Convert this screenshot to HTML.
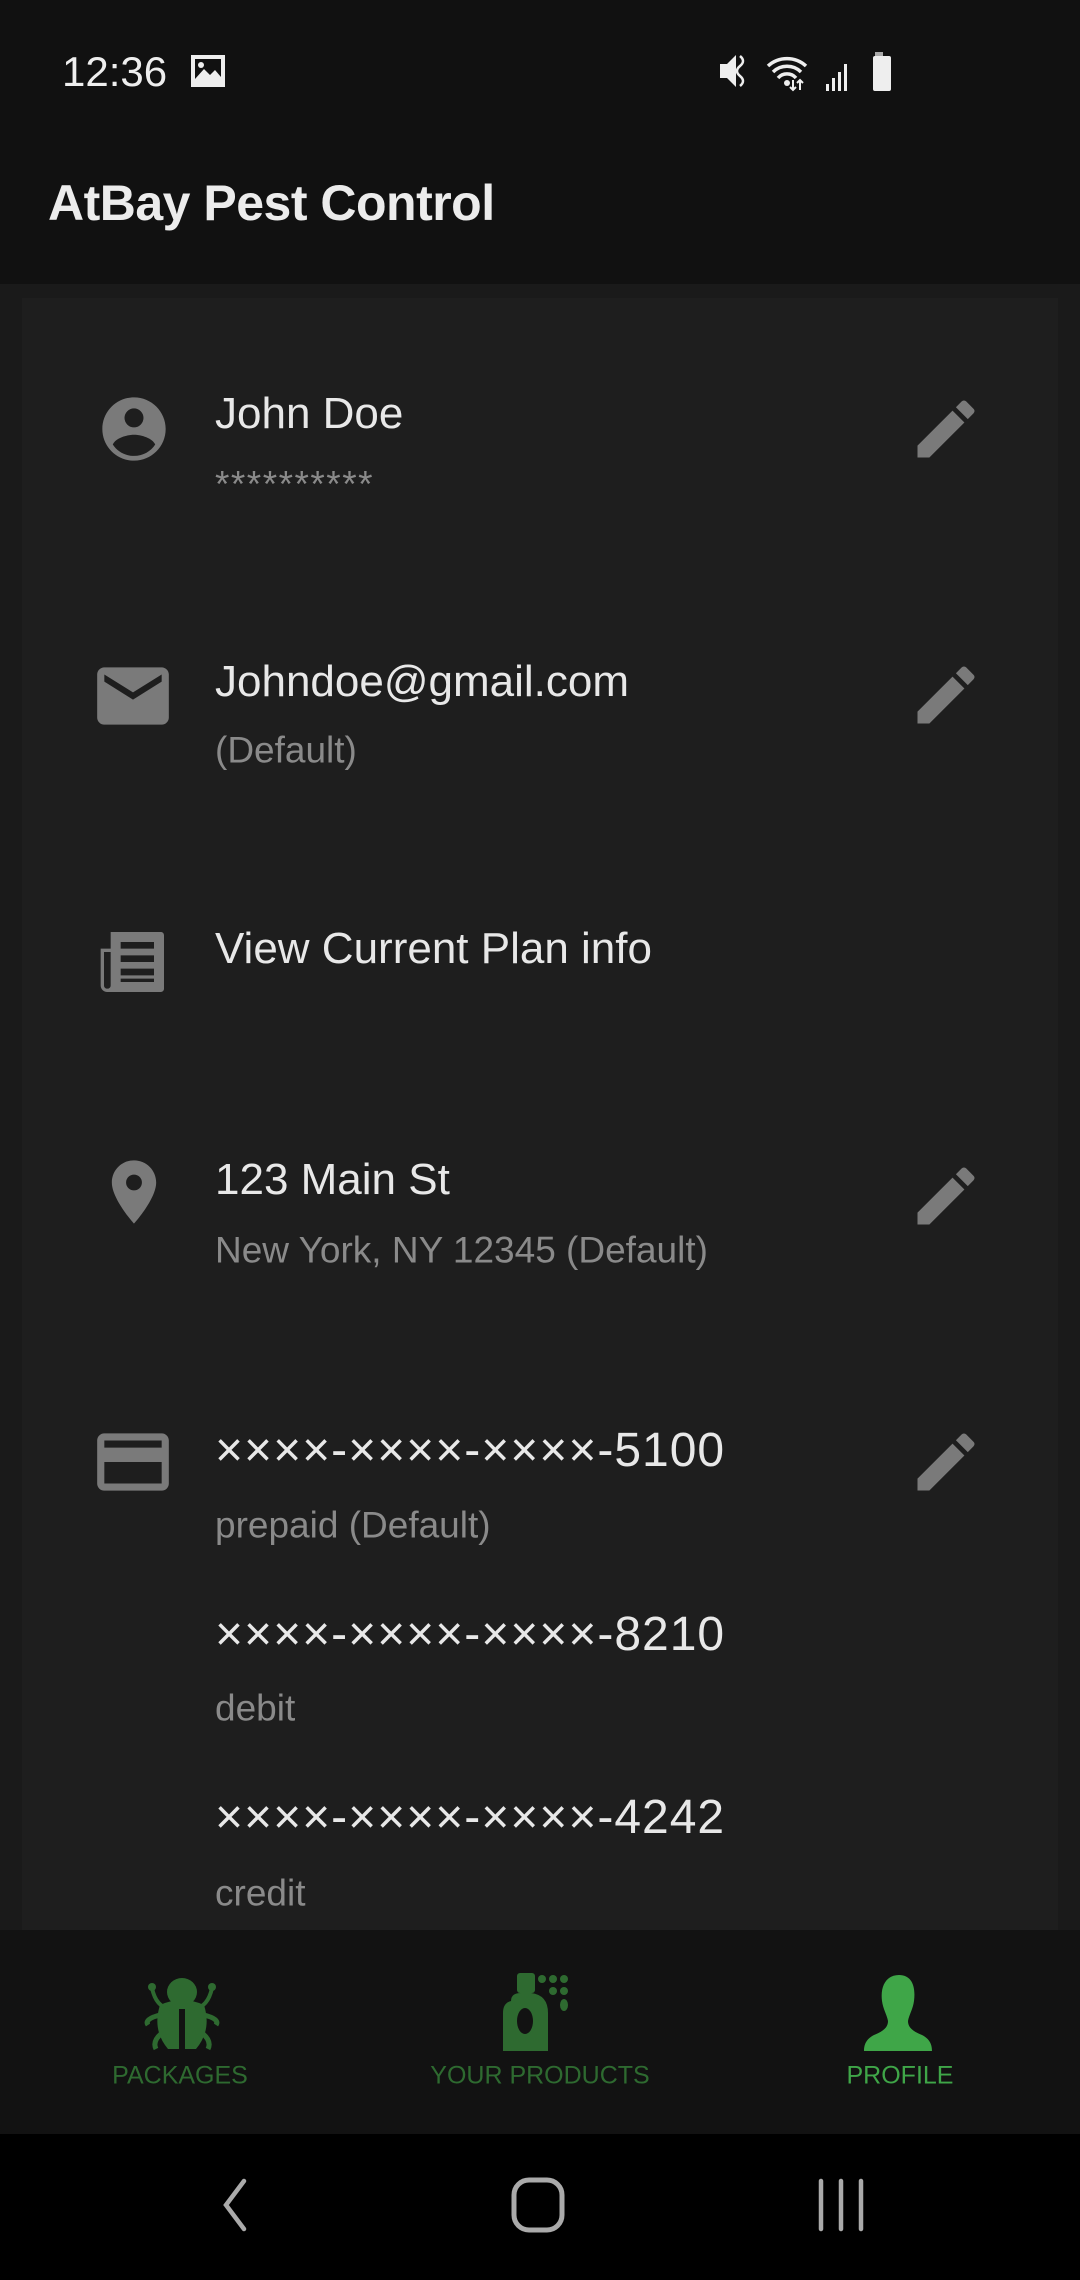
<!DOCTYPE html>
<html><head><meta charset="utf-8">
<style>
*{margin:0;padding:0;box-sizing:border-box}
body{width:1080px;height:2280px;background:#1a1a1a;font-family:"Liberation Sans",Roboto,sans-serif;position:relative;overflow:hidden;color:#e6e6e6}
.abs{position:absolute}
#top{left:0;top:0;width:1080px;height:284px;background:#111}
#card{left:22px;top:298px;width:1036px;height:1632px;background:#1e1e1e}
.t1{position:absolute;left:215px;font-size:44px;color:#e8e8e8;line-height:1;transform:translateY(-50%)}
.t2{position:absolute;left:215px;font-size:37px;color:#8a8a8a;line-height:1;transform:translateY(-50%)}
.cn{font-size:48px;letter-spacing:1px}
.ic{position:absolute}
#nav{left:0;top:1930px;width:1080px;height:204px;background:#121212}
#sys{left:0;top:2134px;width:1080px;height:146px;background:#000}
.lbl{position:absolute;top:2076px;font-size:25px;transform:translate(-50%,-50%);white-space:nowrap}
</style></head><body>
<div id="top" class="abs"></div>
<div class="abs" style="left:62px;top:48px;font-size:42px;color:#eee">12:36</div>
<svg class="abs" style="left:190px;top:54px" width="36" height="34" viewBox="0 0 36 34"><rect x="1" y="1" width="34" height="32" fill="#eee"/><rect x="5" y="5" width="26" height="20" fill="#111"/><circle cx="11" cy="11" r="3" fill="#eee"/><path d="M5 25 L14 15 L20 21 L25 16 L31 23 L31 25Z" fill="#eee"/></svg>
<svg class="abs" style="left:718px;top:50px" width="185" height="42" viewBox="0 0 185 42">
<path d="M2 14h7l9-9v32l-9-9H2z" fill="#eee"/><path d="M22 6 q6 5 0 10 q-6 5 0 10 q6 5 0 10" stroke="#eee" stroke-width="2.5" fill="none"/>
<path d="M50 16 a28 28 0 0 1 38 0 M55 22 a20 20 0 0 1 28 0 M60 28 a12 12 0 0 1 18 0" stroke="#eee" stroke-width="3.5" fill="none"/><circle cx="69" cy="33" r="3" fill="#eee"/><path d="M75 30v10 M72 37l3 3 3-3 M82 40v-10 M79 33l3-3 3 3" stroke="#eee" stroke-width="2" fill="none"/>
<rect x="108" y="34" width="3" height="7" fill="#eee"/><rect x="114" y="28" width="3" height="13" fill="#eee"/><rect x="120" y="22" width="3" height="19" fill="#eee"/><rect x="126" y="14" width="3" height="27" fill="#eee"/>
<rect x="157" y="2" width="8" height="5" fill="#aaa"/><rect x="155" y="6" width="18" height="35" rx="2" fill="#eee"/></svg>
<div class="abs" style="left:48px;top:174px;font-size:50px;font-weight:bold;color:#ececec;letter-spacing:-0.5px">AtBay Pest Control</div>

<div id="card" class="abs"></div>

<svg class="ic" style="left:96px;top:391px" width="76" height="76" viewBox="0 0 24 24"><path fill="#7a7a7a" d="M12 2C6.48 2 2 6.48 2 12s4.48 10 10 10 10-4.48 10-10S17.52 2 12 2zm0 3.5a3 3 0 1 1 0 6 3 3 0 0 1 0-6zm0 15c-2.8 0-5.3-1.4-6.7-3.6.8-2 4.4-3.1 6.7-3.1s5.9 1.1 6.7 3.1c-1.4 2.2-3.9 3.6-6.7 3.6z"/></svg>
<div class="t1" style="top:414px">John Doe</div>
<div class="t2" style="top:484px;letter-spacing:1.5px">**********</div>
<svg class="ic" style="left:908px;top:391px" width="76" height="76" viewBox="0 0 24 24"><path fill="#7a7a7a" d="M3 17.25V21h3.75L17.81 9.94l-3.75-3.75L3 17.25zM20.71 7.04a1 1 0 0 0 0-1.41l-2.34-2.34a1 1 0 0 0-1.41 0l-1.83 1.83 3.75 3.75 1.83-1.83z"/></svg>

<svg class="ic" style="left:90px;top:653px" width="86" height="86" viewBox="0 0 24 24"><path fill="#7a7a7a" d="M20 4H4c-1.1 0-2 .9-2 2v12c0 1.1.9 2 2 2h16c1.1 0 2-.9 2-2V6c0-1.1-.9-2-2-2zm0 4l-8 5-8-5V6l8 5 8-5v2z"/></svg>
<div class="t1" style="top:682px">Johndoe@gmail.com</div>
<div class="t2" style="top:750px">(Default)</div>
<svg class="ic" style="left:908px;top:657px" width="76" height="76" viewBox="0 0 24 24"><path fill="#7a7a7a" d="M3 17.25V21h3.75L17.81 9.94l-3.75-3.75L3 17.25zM20.71 7.04a1 1 0 0 0 0-1.41l-2.34-2.34a1 1 0 0 0-1.41 0l-1.83 1.83 3.75 3.75 1.83-1.83z"/></svg>

<svg class="ic" style="left:94px;top:922px" width="80" height="80" viewBox="0 0 24 24"><path fill="#7a7a7a" d="M5 3h15c.6 0 1 .4 1 1v16c0 .6-.4 1-1 1H4c-1.1 0-2-.9-2-2V8h3V3zm3 3v2h10V6H8zm0 4v2h10v-2H8zm0 4v2h10v-2H8zm0 4h10v-1H8v1zM3 9v10c0 .6.4 1 1 1s1-.4 1-1V9H3z"/></svg>
<div class="t1" style="top:949px">View Current Plan info</div>

<svg class="ic" style="left:96px;top:1154px" width="76" height="76" viewBox="0 0 24 24"><path fill="#7a7a7a" d="M12 2C8.130 2 5 5.13 5 9c0 5.25 7 13 7 13s7-7.75 7-13c0-3.870-3.130-7-7-7zm0 9.5a2.5 2.5 0 1 1 0-5 2.5 2.5 0 0 1 0 5z"/></svg>
<div class="t1" style="top:1180px">123 Main St</div>
<div class="t2" style="top:1250px">New York, NY 12345 (Default)</div>
<svg class="ic" style="left:908px;top:1158px" width="76" height="76" viewBox="0 0 24 24"><path fill="#7a7a7a" d="M3 17.25V21h3.75L17.81 9.94l-3.75-3.75L3 17.25zM20.71 7.04a1 1 0 0 0 0-1.41l-2.34-2.34a1 1 0 0 0-1.41 0l-1.83 1.83 3.75 3.75 1.83-1.83z"/></svg>

<svg class="ic" style="left:90px;top:1419px" width="86" height="86" viewBox="0 0 24 24"><path fill="#7a7a7a" d="M20 4H4c-1.11 0-2 .89-2 2v12c0 1.11.89 2 2 2h16c1.11 0 2-.89 2-2V6c0-1.11-.89-2-2-2zm0 14H4v-6h16v6zm0-10H4V6h16v2z"/></svg>
<div class="t1 cn" style="top:1451px">××××-××××-××××-5100</div>
<div class="t2" style="top:1525px">prepaid (Default)</div>
<svg class="ic" style="left:908px;top:1424px" width="76" height="76" viewBox="0 0 24 24"><path fill="#7a7a7a" d="M3 17.25V21h3.75L17.81 9.94l-3.75-3.75L3 17.25zM20.71 7.04a1 1 0 0 0 0-1.41l-2.34-2.34a1 1 0 0 0-1.41 0l-1.83 1.83 3.75 3.75 1.83-1.83z"/></svg>
<div class="t1 cn" style="top:1635px">××××-××××-××××-8210</div>
<div class="t2" style="top:1708px">debit</div>
<div class="t1 cn" style="top:1818px">××××-××××-××××-4242</div>
<div class="t2" style="top:1893px">credit</div>

<div id="nav" class="abs"></div>
<svg class="abs" style="left:142px;top:1975px" width="80" height="76" viewBox="0 0 80 76"><g fill="#2e6a30"><ellipse cx="40" cy="17" rx="15" ry="14"/><path d="M18 30 Q40 20 62 30 Q70 55 54 74 L43 74 L43 34 L37 34 L37 74 L26 74 Q10 55 18 30Z"/><path d="M10 13 Q14 32 28 34" stroke="#2e6a30" stroke-width="4" fill="none"/><path d="M70 13 Q66 32 52 34" stroke="#2e6a30" stroke-width="4" fill="none"/><circle cx="10" cy="12" r="4"/><circle cx="70" cy="12" r="4"/><path d="M18 40 Q2 44 6 50" stroke="#2e6a30" stroke-width="5" fill="none"/><path d="M62 40 Q78 44 74 50" stroke="#2e6a30" stroke-width="5" fill="none"/><path d="M20 58 Q10 66 14 74" stroke="#2e6a30" stroke-width="5" fill="none"/><path d="M60 58 Q70 66 66 74" stroke="#2e6a30" stroke-width="5" fill="none"/></g></svg>
<svg class="abs" style="left:503px;top:1973px" width="76" height="78" viewBox="0 0 76 78"><g fill="#2e6a30"><rect x="14" y="0" width="18" height="20" rx="3"/><path d="M8 28 Q8 20 18 20 L28 20 Q45 22 45 40 L45 78 L0 78 L0 40 Q0 30 8 28Z"/><circle cx="39" cy="6" r="4"/><circle cx="50" cy="6" r="4"/><circle cx="61" cy="6" r="4"/><circle cx="50" cy="18" r="4"/><circle cx="61" cy="18" r="4"/><ellipse cx="61" cy="32" rx="4" ry="6"/></g><ellipse cx="22" cy="48" rx="8" ry="13" fill="#121212"/></svg>
<svg class="abs" style="left:864px;top:1975px" width="70" height="76" viewBox="0 0 70 76"><path fill="#3fa648" d="M35 0 C47 0 52 10 50 26 C49 34 45 40 44 46 C44 52 48 56 58 60 C66 64 68 70 68 76 L0 76 C0 70 2 64 10 60 C20 56 24 52 24 46 C23 40 19 34 18 26 C16 10 23 0 35 0Z"/></svg>
<div class="lbl" style="left:180px;color:#2e6a30">PACKAGES</div>
<div class="lbl" style="left:540px;color:#2e6a30">YOUR PRODUCTS</div>
<div class="lbl" style="left:900px;color:#3fa648">PROFILE</div>

<div id="sys" class="abs"></div>
<svg class="abs" style="left:218px;top:2178px" width="34" height="54" viewBox="0 0 34 54"><path d="M26 3 L8 27 L26 51" stroke="#aaa" stroke-width="4.5" fill="none" stroke-linecap="round"/></svg>
<svg class="abs" style="left:510px;top:2176px" width="56" height="58" viewBox="0 0 56 58"><rect x="4" y="4" width="48" height="50" rx="15" stroke="#aaa" stroke-width="5" fill="none"/></svg>
<svg class="abs" style="left:815px;top:2178px" width="52" height="54" viewBox="0 0 52 54"><path d="M6 3v48 M26 3v48 M46 3v48" stroke="#aaa" stroke-width="4.5" stroke-linecap="round"/></svg>
</body></html>
